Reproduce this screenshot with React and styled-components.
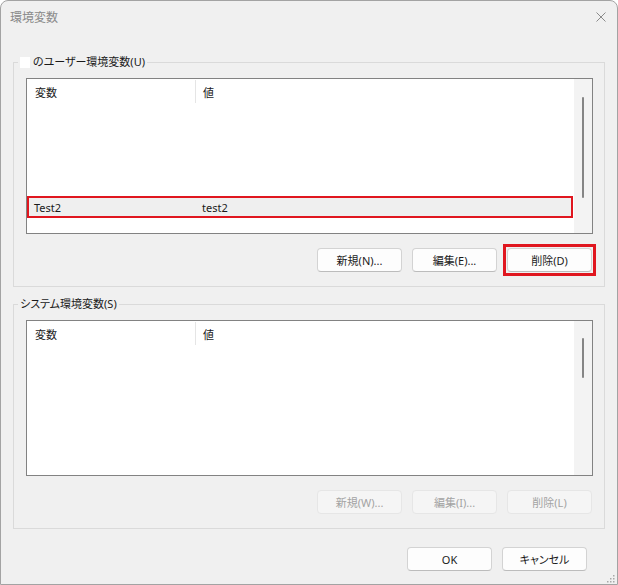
import React from 'react';
import styled, { createGlobalStyle } from "styled-components";

const userVars = [{ name: "Test2", value: "test2" }];

function VarList({ rows, thumbTop, thumbHeight }) {
    return (
        <ListBox>
            <ListMain>
                <Header>
                    <HeadCell $first>変数</HeadCell>
                    <Divider />
                    <HeadCell>値</HeadCell>
                </Header>
                {rows.map((r) => (
                    <Row key={r.name} $marked>
                        <Cell $first>{r.name}</Cell>
                        <Cell>{r.value}</Cell>
                    </Row>
                ))}
            </ListMain>
            <Scrollbar>
                <Thumb $top={thumbTop} $height={thumbHeight} />
            </Scrollbar>
        </ListBox>
    );
}

export default function App() {
    return (
        <>
            <GlobalStyle />
            <Window>
                <TitleBar>
                    <span>環境変数</span>
                    <svg width="10" height="10" viewBox="0 0 10 10">
                        <path d="M0.5 0.5 L9.5 9.5 M9.5 0.5 L0.5 9.5" stroke="#8a8a8a" strokeWidth="1" />
                    </svg>
                </TitleBar>
                <Body>
                    <Group>
                        <Legend>
                            <Redact />
                            のユーザー環境変数(U)
                        </Legend>
                        <VarList rows={userVars} thumbTop={18} thumbHeight={101} />
                        <ButtonRow>
                            <Button>新規(N)...</Button>
                            <Button>編集(E)...</Button>
                            <Marker>
                                <Button>削除(D)</Button>
                            </Marker>
                        </ButtonRow>
                    </Group>
                    <Group $gap>
                        <Legend>システム環境変数(S)</Legend>
                        <VarList rows={[]} thumbTop={17} thumbHeight={40} />
                        <ButtonRow>
                            <Button disabled>新規(W)...</Button>
                            <Button disabled>編集(I)...</Button>
                            <Button disabled>削除(L)</Button>
                        </ButtonRow>
                    </Group>
                    <Footer>
                        <Button>OK</Button>
                        <Button>キャンセル</Button>
                    </Footer>
                </Body>
                <Grip width="9" height="9" viewBox="0 0 9 9">
                    {[[7, 1], [7, 4], [4, 4], [7, 7], [4, 7], [1, 7]].map(([x, y]) => (
                        <rect key={`${x}-${y}`} x={x} y={y} width="1.5" height="1.5" fill="#a8a8a8" />
                    ))}
                </Grip>
            </Window>
        </>
    );
}

const GlobalStyle = createGlobalStyle`
    html, body {
        margin: 0;
        padding: 0;
        background: #ffffff;
    }
    body {
        font-family: "Noto Sans", "Noto Sans CJK JP", sans-serif;
        font-size: 11px;
        font-feature-settings: "palt";
        color: #1a1a1a;
    }
`
const Window = styled.div`
    position: relative;
    width: 618px;
    height: 585px;
    box-sizing: border-box;
    border: 1px solid #a3a3a3;
    border-radius: 8px 8px 0 0;
    background: #f0f0f0;
    display: flex;
    flex-direction: column;
    overflow: hidden;
`
const TitleBar = styled.div`
    height: 31px;
    flex-shrink: 0;
    display: flex;
    align-items: center;
    justify-content: space-between;
    padding: 0 11px 0 9px;
    color: #8a8a8a;
    font-size: 12px;
`
const Body = styled.div`
    flex: 1;
    padding: 22px 12px 0 12px;
`
const Group = styled.fieldset`
    margin: ${(p) => (p.$gap ? "9px" : "0")} 0 0 0;
    padding: 8px 11px 14px 12px;
    border: 1px solid #dadada;
    min-width: 0;
`
const Legend = styled.legend`
    display: flex;
    align-items: center;
    padding: 0 2px;
    margin-left: -8px;
    line-height: 16px;
    height: 16px;
`
const Redact = styled.span`
    width: 10px;
    height: 11px;
    background: #ffffff;
    margin-right: 3px;
`
const ListBox = styled.div`
    height: 156px;
    box-sizing: border-box;
    border: 1px solid #828282;
    background: #ffffff;
    display: flex;
`
const ListMain = styled.div`
    flex: 1;
    display: flex;
    flex-direction: column;
`
const Header = styled.div`
    height: 25px;
    flex-shrink: 0;
    display: flex;
    align-items: center;
`
const HeadCell = styled.div`
    box-sizing: border-box;
    width: ${(p) => (p.$first ? "168px" : "auto")};
    padding-left: ${(p) => (p.$first ? "8px" : "7px")};
`
const Divider = styled.div`
    width: 1px;
    height: 23px;
    background: #e5e5e5;
`
const Row = styled.div`
    margin: auto 1px 15px 0;
    height: 22px;
    box-sizing: border-box;
    border: 2px solid ${(p) => (p.$marked ? "#e0161f" : "transparent")};
    background: #efefef;
    display: flex;
    align-items: center;
`
const Cell = styled.div`
    box-sizing: border-box;
    width: ${(p) => (p.$first ? "173px" : "auto")};
    padding-left: ${(p) => (p.$first ? "5px" : "0")};
`
const Scrollbar = styled.div`
    width: 18px;
    flex-shrink: 0;
    background: #f3f3f3;
`
const Thumb = styled.div`
    width: 2px;
    margin-left: 8px;
    margin-top: ${(p) => p.$top}px;
    height: ${(p) => p.$height}px;
    border-radius: 1px;
    background: #858585;
`
const ButtonRow = styled.div`
    display: flex;
    justify-content: flex-end;
    gap: 10px;
    margin-top: 14px;
    padding-right: 1px;
`
const Marker = styled.div`
    display: flex;
    margin: -4px;
    padding: 1px;
    border: 3px solid #e0161f;
`
const Button = styled.button`
    width: 85px;
    height: 24px;
    box-sizing: border-box;
    padding: 0;
    border-radius: 4px;
    border: 1px solid #d3d3d3;
    border-bottom-color: #bcbcbc;
    background: #fdfdfd;
    font-family: inherit;
    font-size: 11px;
    font-feature-settings: "palt";
    color: #1a1a1a;
    display: flex;
    align-items: center;
    justify-content: center;

    &:disabled {
        background: #f5f5f5;
        border-color: #e6e6e6;
        color: #a3a3a3;
    }
`
const Footer = styled.div`
    display: flex;
    justify-content: flex-end;
    gap: 10px;
    margin-top: 18px;
    padding-right: 18px;
`
const Grip = styled.svg`
    position: absolute;
    right: 2px;
    bottom: 1px;
`
